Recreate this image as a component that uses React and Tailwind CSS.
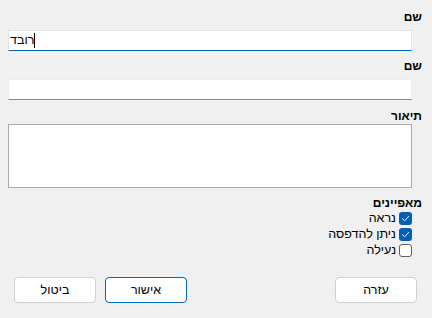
import React from 'react';

const font = { fontFamily: '"Liberation Sans", "DejaVu Sans", sans-serif' };

const Check = ({ checked }) => (
    <span
        className={`w-[13px] h-[13px] rounded-[3px] flex items-center justify-center shrink-0 ${
            checked ? 'bg-[#005fb8]' : 'bg-white border border-[#5f5f5f]'
        }`}
    >
        {checked && (
            <svg width="9" height="9" viewBox="0 0 9 9" fill="none">
                <path d="M1.5 4.8 L3.6 6.8 L7.6 2.4" stroke="white" strokeWidth="1" strokeLinecap="round" strokeLinejoin="round" />
            </svg>
        )}
    </span>
);

const Button = ({ children, primary, className = '' }) => (
    <button
        className={`w-[82px] h-[26px] bg-white rounded-[4px] text-[12.5px] text-black ${
            primary ? 'border border-[#0067c0]' : 'border border-[#d0d0d0]'
        } ${className}`}
    >
        {children}
    </button>
);

export default function App() {
    const features = [
        { name: 'נראה', checked: true },
        { name: 'ניתן להדפסה', checked: true },
        { name: 'נעילה', checked: false },
    ];

    return (
        <div dir="rtl" style={font} className="w-[432px] h-[318px] bg-[#f0f0f0] text-black text-[12px] flex flex-col pr-[10px] pl-[8px] overflow-hidden">
            <div className="font-bold h-[14px] leading-[14px] mt-[10px]">שם</div>
            <div dir="ltr" className="mr-[10px] mt-[6px] h-[21px] bg-white border border-[#e5e5e5] border-b-[#005fb8] flex items-center pl-[1px]">
                <span className="text-[12.5px] leading-none">רובד</span>
                <span className="w-px h-[15px] bg-black"></span>
            </div>

            <div className="font-bold h-[14px] leading-[14px] mt-[8px]">שם</div>
            <div className="mr-[10px] mt-[6px] h-[21px] bg-white border border-[#ececec] border-b-[#8a8a8a]"></div>

            <div className="font-bold h-[14px] leading-[14px] mt-[9px]">תיאור</div>
            <div className="mr-[10px] mt-[1px] h-[64px] bg-white border border-[#a9a9a9]"></div>

            <div className="font-bold h-[14px] leading-[14px] mt-[8px]">מאפיינים</div>
            <div className="mr-[10px] flex flex-col">
                {features.map((f) => (
                    <div key={f.name} className="flex items-center gap-[3px] h-[16px]">
                        <Check checked={f.checked} />
                        <span className="leading-none text-[12.5px]">{f.name}</span>
                    </div>
                ))}
            </div>

            <div className="flex items-center mt-[19px] pr-[5px] pl-[6px]">
                <Button>עזרה</Button>
                <div className="flex-1"></div>
                <Button primary>אישור</Button>
                <Button className="mr-[9px]">ביטול</Button>
            </div>
        </div>
    );
}
